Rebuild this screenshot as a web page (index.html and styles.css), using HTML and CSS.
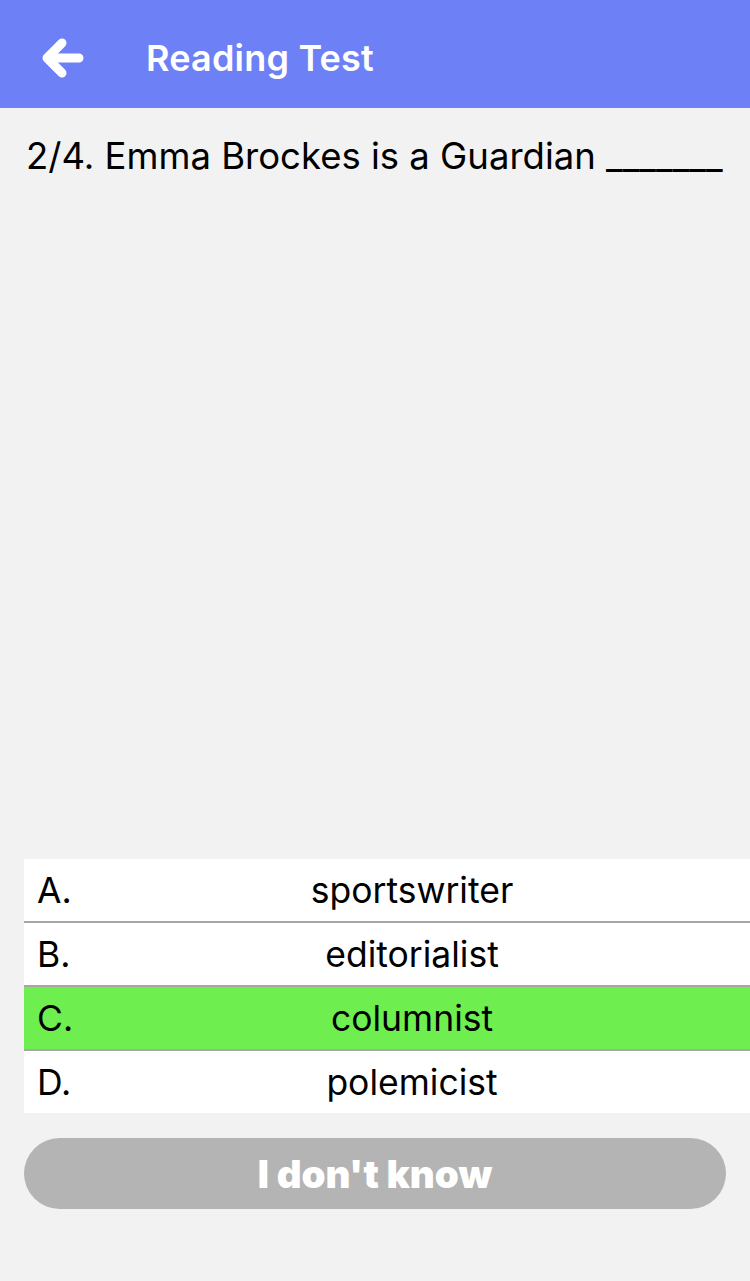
FILE: index.html
```html
<!DOCTYPE html>
<html>
<head>
<meta charset="utf-8">
<link rel="stylesheet" href="styles.css">
</head>
<body>
<div class="screen">
  <header class="topbar">
    <span class="back">
      <svg width="46" height="46" viewBox="0 0 46 46"><path d="M40 23 H10 M23 8 L8 23 L23 38" fill="none" stroke="#fff" stroke-width="9" stroke-linecap="round" stroke-linejoin="round"/></svg>
    </span>
    <span class="title">Reading Test</span>
  </header>
  <main class="content">
    <p class="question">2/4. Emma Brockes is a Guardian _______</p>
    <div class="spacer"></div>
    <ul class="options">
      <li class="option"><span class="letter">A.</span><span class="answer">sportswriter</span></li>
      <li class="option"><span class="letter">B.</span><span class="answer">editorialist</span></li>
      <li class="option correct"><span class="letter">C.</span><span class="answer">columnist</span></li>
      <li class="option"><span class="letter">D.</span><span class="answer">polemicist</span></li>
    </ul>
    <button class="dontknow">I don't know</button>
  </main>
</div>
</body>
</html>
```
FILE: styles.css
```css
* { box-sizing: border-box; }
html, body { margin: 0; padding: 0; }
body {
  width: 750px;
  height: 1281px;
  background: #f2f2f2;
  font-family: Inter, "Liberation Sans", sans-serif;
  color: #000;
  overflow: hidden;
}
.screen { display: flex; flex-direction: column; height: 1281px; }
.topbar {
  height: 108px;
  background: #6e80f5;
  display: flex;
  align-items: center;
  padding-left: 39px;
  padding-top: 8px;
}
.back { display: flex; width: 46px; height: 46px; }
.title {
  color: #fff;
  font-size: 36px;
  font-weight: 600;
  margin-left: 61px;
  letter-spacing: 0.2px;
}
.content {
  flex: 1;
  display: flex;
  flex-direction: column;
  padding: 0 0 72px 24px;
}
.question {
  margin: 27px 0 0 2px;
  font-size: 36.5px;
  line-height: 42px;
}
.spacer { flex: 1; }
.options { list-style: none; margin: 0; padding: 0; }
.option {
  height: 64px;
  background: #fff;
  display: flex;
  align-items: center;
  font-size: 35.5px;
  border-bottom: 2px solid #a6a6a6;
}
.option:last-child { border-bottom: none; height: 62px; }
.option.correct { background: #6fee4f; }
.letter { width: 50px; padding-left: 13px; }
.answer { flex: 1; text-align: center; }
.dontknow {
  margin-top: 25px;
  width: 702px;
  height: 71px;
  border: none;
  border-radius: 36px;
  background: #b4b4b4;
  color: #fff;
  font-family: Inter, "Liberation Sans", sans-serif;
  font-size: 38.5px;
  font-weight: 900;
}
```
